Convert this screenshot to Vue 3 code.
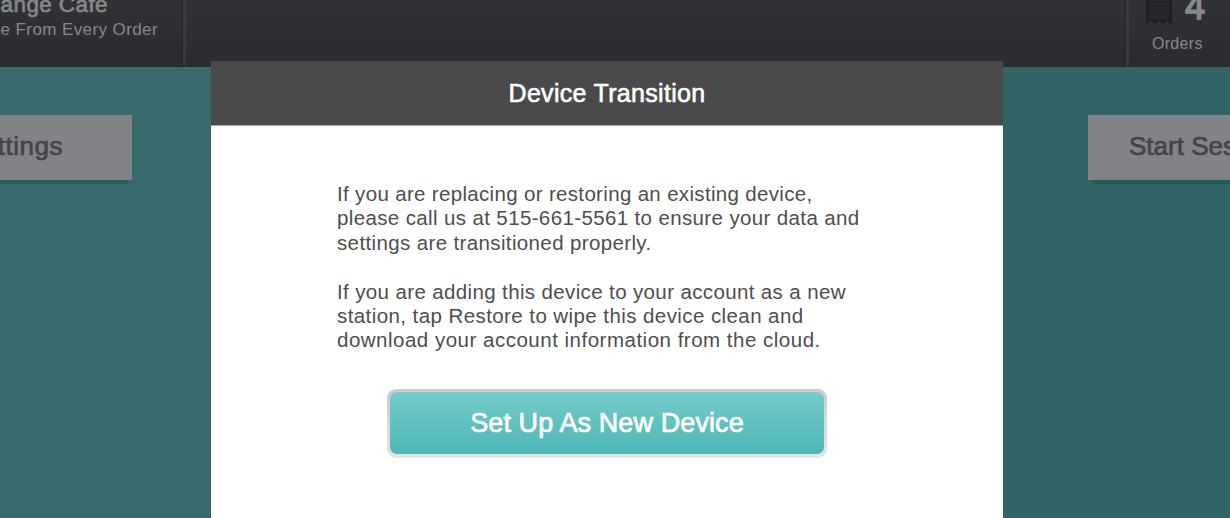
<script setup>
const paragraphs = [
  [
    'If you are replacing or restoring an existing device,',
    'please call us at 515-661-5561 to ensure your data and',
    'settings are transitioned properly.',
  ],
  [
    'If you are adding this device to your account as a new',
    'station, tap Restore to wipe this device clean and',
    'download your account information from the cloud.',
  ],
]
</script>

<template>
  <div class="screen">
    <header class="topbar">
      <div class="venue">
        <div class="venue-name">ange Cafe</div>
        <div class="venue-note">e From Every Order</div>
      </div>
      <div class="topbar-middle"></div>
      <div class="orders">
        <div class="orders-row">
          <svg class="receipt" width="28" height="26" viewBox="0 0 28 26">
            <path d="M1 0H27V25L22.5 20.5L18 24L14 20.5L10 24L5.5 20.5L1 25Z" fill="#1f2023" />
            <path d="M4 0H24V19H4Z" fill="#26272a" />
            <path d="M6 2.5H22M6 5.5H22M8 8.5H20" stroke="#222326" />
            <path d="M4 14.5H24" stroke="#1d1e21" stroke-dasharray="2 2" />
          </svg>
          <span class="orders-count">4</span>
        </div>
        <div class="orders-label">Orders</div>
      </div>
    </header>

    <main class="stage">
      <div class="tile tile-left"><span>ttings</span></div>
      <div class="tile tile-right"><span>Start Ses</span></div>
    </main>

    <section class="modal">
      <div class="modal-header">
        <h1>Device Transition</h1>
      </div>
      <div class="modal-body">
        <p v-for="(lines, i) in paragraphs" :key="i">
          <span v-for="(line, j) in lines" :key="j" class="line" :class="`line-${i}-${j}`">{{ line }}</span>
        </p>
        <button class="setup" type="button"><span>Set Up As New Device</span></button>
      </div>
    </section>
  </div>
</template>

<style>
body {
  background: #336667;
}
</style>

<style scoped>
.screen {
  position: relative;
  display: flex;
  flex-direction: column;
  height: 518px;
  overflow: hidden;
  font-family: "Liberation Sans", Arial, sans-serif;
}

.topbar {
  display: flex;
  height: 67px;
  flex: none;
  box-sizing: border-box;
  border-bottom: 1px solid #29292c;
  background: linear-gradient(#313236, #2b2c30);
  color: #87888b;
  white-space: nowrap;
}

.venue {
  width: 183px;
  flex: none;
  display: flex;
  flex-direction: column;
  overflow: hidden;
}

.venue-name {
  width: 108px;
  height: 18px;
  display: flex;
  justify-content: flex-end;
  align-items: flex-end;
  font-size: 22.5px;
  line-height: 26px;
  letter-spacing: 0.4px;
  -webkit-text-stroke: 0.6px currentColor;
}

.venue-note {
  width: 158px;
  padding-top: 1px;
  display: flex;
  justify-content: flex-end;
  font-size: 17px;
  line-height: 22px;
  letter-spacing: 0.4px;
}

.topbar-middle {
  flex: 1;
  border-left: 3px solid #3a3b3f;
  border-right: 3px solid #3a3b3f;
  box-shadow: -2px 0 0 #27282c, inset -2px 0 0 #27282c;
}

.orders {
  width: 101px;
  flex: none;
}

.orders-row {
  display: flex;
  height: 26px;
  padding-left: 16px;
  align-items: flex-end;
}

.orders-count {
  margin-left: 12px;
  font-size: 36px;
  line-height: 38px;
  -webkit-text-stroke: 1.6px currentColor;
}

.orders-label {
  padding: 7px 0 0 23px;
  font-size: 16px;
  line-height: 21px;
  letter-spacing: 0.3px;
}

.stage {
  flex: 1;
  display: flex;
  justify-content: space-between;
  align-items: flex-start;
  padding-top: 48px;
  background: linear-gradient(90deg, #396a6b 600px, #316466 600px);
}

.tile {
  height: 65px;
  box-sizing: border-box;
  display: flex;
  align-items: center;
  padding-bottom: 2px;
  background: #828387;
  color: #434448;
  font-size: 26px;
  white-space: nowrap;
  -webkit-text-stroke: 0.7px currentColor;
}

.tile-left {
  width: 132px;
  padding-right: 69px;
  justify-content: flex-end;
  letter-spacing: 0.5px;
  box-shadow: -4px 4px 0 #2a5c5e;
}

.tile-right {
  width: 142px;
  padding-left: 41px;
  box-shadow: 4px 4px 0 #27595b;
}

.modal {
  position: absolute;
  top: 61px;
  left: 211px;
  width: 792px;
  height: 457px;
  display: flex;
  flex-direction: column;
  background: #fff;
}

.modal-header {
  height: 65px;
  flex: none;
  box-sizing: border-box;
  display: flex;
  align-items: center;
  justify-content: center;
  border-bottom: 1px solid #a9a9a9;
  background: #4a4a4a;
}

.modal-header h1 {
  margin: 0;
  color: #fff;
  font-size: 25px;
  font-weight: normal;
  letter-spacing: 0.3px;
  -webkit-text-stroke: 0.6px currentColor;
}

.modal-body {
  display: flex;
  flex-direction: column;
  padding: 56px 0 0 126px;
}

.modal-body p {
  margin: 0 0 24.4px;
  color: #4e4e4e;
  font-size: 20.5px;
  line-height: 24.4px;
}

.line {
  display: block;
  white-space: nowrap;
  letter-spacing: 0.37px;
}

.line-0-0 {
  letter-spacing: 0.33px;
}

.line-1-1 {
  letter-spacing: 0.42px;
}

.line-1-2 {
  letter-spacing: 0.5px;
}

.setup {
  width: 440px;
  height: 69px;
  margin: 11.8px 0 0 50px;
  padding: 3px 3px 4px;
  border: 0;
  border-radius: 9px;
  background: linear-gradient(#cccccc, #e4e4e4);
  font: inherit;
}

.setup span {
  display: flex;
  align-items: center;
  justify-content: center;
  height: 62px;
  border-radius: 7px;
  background: linear-gradient(#76cbcb, #4db6b7);
  color: #fff;
  font-size: 27px;
  letter-spacing: 0.1px;
  -webkit-text-stroke: 0.7px currentColor;
}
</style>
